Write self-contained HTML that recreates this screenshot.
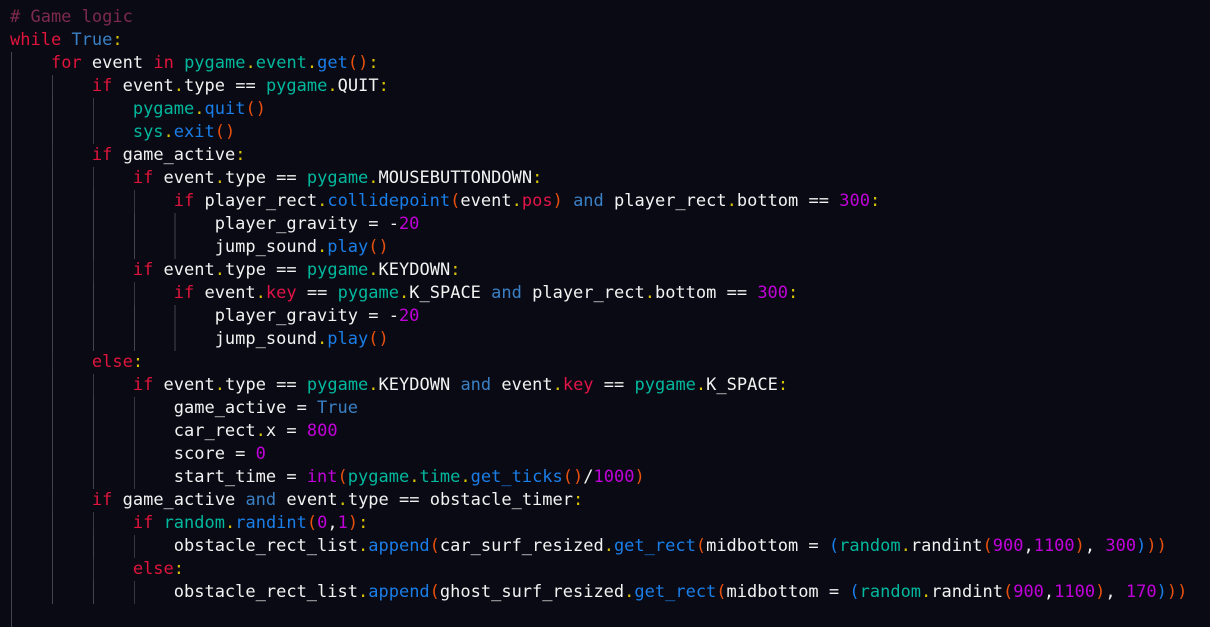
<!DOCTYPE html><html><head><style>
body{margin:0;background:#0a0a14;width:1210px;height:619px;overflow:hidden}
.c{padding-top:6px;font-family:"DejaVu Sans Mono","Liberation Mono",monospace;font-size:17px;color:#f2f2f2;}
.l{height:23px;line-height:23px;white-space:pre;padding-left:10px;background-image:repeating-linear-gradient(to right,#44444e 0 1px,transparent 1px 40.92px);background-repeat:no-repeat;background-position:11px 0;background-size:0 23px}
.i1{background-size:1px 23px}.i2{background-size:41.92px 23px}.i3{background-size:82.84px 23px}.i4{background-size:123.76px 23px}.i5{background-size:164.68px 23px}
.cm{color:#7e2a4c}.k{color:#e0143c}.b{color:#3a80c4}.m{color:#00b89e}.f{color:#1a7ee8}.p{color:#e8500e}.d{color:#d8c400}.n{color:#c000d8}.a{color:#e01448}
</style></head><body><div class="c">
<div class="l"><span class="cm"># Game logic</span></div>
<div class="l"><span class="k">while</span> <span class="b">True</span><span class="d">:</span></div>
<div class="l i1">    <span class="k">for</span> event <span class="k">in</span> <span class="m">pygame</span><span class="d">.</span><span class="m">event</span><span class="d">.</span><span class="f">get</span><span class="p">()</span><span class="d">:</span></div>
<div class="l i2">        <span class="k">if</span> event<span class="d">.</span>type == <span class="m">pygame</span><span class="d">.</span>QUIT<span class="d">:</span></div>
<div class="l i3">            <span class="m">pygame</span><span class="d">.</span><span class="f">quit</span><span class="p">()</span></div>
<div class="l i3">            <span class="m">sys</span><span class="d">.</span><span class="f">exit</span><span class="p">()</span></div>
<div class="l i2">        <span class="k">if</span> game_active<span class="d">:</span></div>
<div class="l i3">            <span class="k">if</span> event<span class="d">.</span>type == <span class="m">pygame</span><span class="d">.</span>MOUSEBUTTONDOWN<span class="d">:</span></div>
<div class="l i4">                <span class="k">if</span> player_rect<span class="d">.</span><span class="f">collidepoint</span><span class="p">(</span>event<span class="d">.</span><span class="a">pos</span><span class="p">)</span> <span class="b">and</span> player_rect<span class="d">.</span>bottom == <span class="n">300</span><span class="d">:</span></div>
<div class="l i5">                    player_gravity = -<span class="n">20</span></div>
<div class="l i5">                    jump_sound<span class="d">.</span><span class="f">play</span><span class="p">()</span></div>
<div class="l i3">            <span class="k">if</span> event<span class="d">.</span>type == <span class="m">pygame</span><span class="d">.</span>KEYDOWN<span class="d">:</span></div>
<div class="l i4">                <span class="k">if</span> event<span class="d">.</span><span class="a">key</span> == <span class="m">pygame</span><span class="d">.</span>K_SPACE <span class="b">and</span> player_rect<span class="d">.</span>bottom == <span class="n">300</span><span class="d">:</span></div>
<div class="l i5">                    player_gravity = -<span class="n">20</span></div>
<div class="l i5">                    jump_sound<span class="d">.</span><span class="f">play</span><span class="p">()</span></div>
<div class="l i2">        <span class="k">else</span><span class="d">:</span></div>
<div class="l i3">            <span class="k">if</span> event<span class="d">.</span>type == <span class="m">pygame</span><span class="d">.</span>KEYDOWN <span class="b">and</span> event<span class="d">.</span><span class="a">key</span> == <span class="m">pygame</span><span class="d">.</span>K_SPACE<span class="d">:</span></div>
<div class="l i4">                game_active = <span class="b">True</span></div>
<div class="l i4">                car_rect<span class="d">.</span>x = <span class="n">800</span></div>
<div class="l i4">                score = <span class="n">0</span></div>
<div class="l i4">                start_time = <span class="n">int</span><span class="p">(</span><span class="m">pygame</span><span class="d">.</span><span class="m">time</span><span class="d">.</span><span class="f">get_ticks</span><span class="p">()</span>/<span class="n">1000</span><span class="p">)</span></div>
<div class="l i2">        <span class="k">if</span> game_active <span class="b">and</span> event<span class="d">.</span>type == obstacle_timer<span class="d">:</span></div>
<div class="l i3">            <span class="k">if</span> <span class="m">random</span><span class="d">.</span><span class="f">randint</span><span class="p">(</span><span class="n">0</span>,<span class="n">1</span><span class="p">)</span><span class="d">:</span></div>
<div class="l i4">                obstacle_rect_list<span class="d">.</span><span class="f">append</span><span class="p">(</span>car_surf_resized<span class="d">.</span><span class="f">get_rect</span><span class="p">(</span>midbottom = <span class="f">(</span><span class="m">random</span><span class="d">.</span>randint<span class="p">(</span><span class="n">900</span>,<span class="n">1100</span><span class="p">)</span>, <span class="n">300</span><span class="f">)</span><span class="p">))</span></div>
<div class="l i3">            <span class="k">else</span><span class="d">:</span></div>
<div class="l i4">                obstacle_rect_list<span class="d">.</span><span class="f">append</span><span class="p">(</span>ghost_surf_resized<span class="d">.</span><span class="f">get_rect</span><span class="p">(</span>midbottom = <span class="f">(</span><span class="m">random</span><span class="d">.</span>randint<span class="p">(</span><span class="n">900</span>,<span class="n">1100</span><span class="p">)</span>, <span class="n">170</span><span class="f">)</span><span class="p">))</span></div>
<div class="l i1"> </div>
</div></body></html>
